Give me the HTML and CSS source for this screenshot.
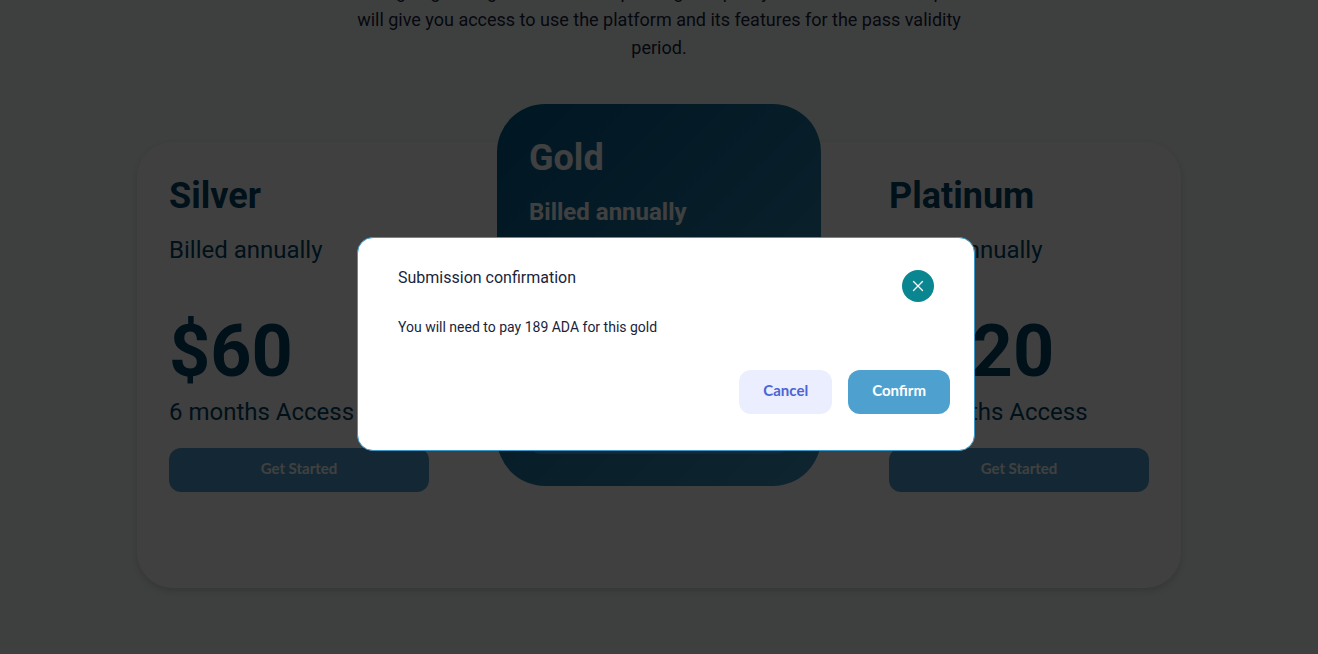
FILE: index.html
```html
<!DOCTYPE html>
<html lang="en">
<head>
<meta charset="utf-8">
<meta name="viewport" content="width=device-width, initial-scale=1">
<title>Plans</title>
<link rel="stylesheet" href="styles.css">
</head>
<body>
<main class="page">
  <p class="intro">When going through the list of the passing to a policy and all terms of the pass<br>will give you access to use the platform and its features for the pass validity period.</p>
  <section class="plans">
    <article class="plan">
      <h2 class="plan-name">Silver</h2>
      <p class="plan-billing">Billed annually</p>
      <p class="plan-price">$60</p>
      <p class="plan-access">6 months Access</p>
      <button class="button button-wide" type="button">Get Started</button>
    </article>
    <article class="plan plan-featured">
      <h2 class="plan-name">Gold</h2>
      <p class="plan-billing">Billed annually</p>
      <p class="plan-price">$90</p>
      <p class="plan-access">9 months Access</p>
      <button class="button button-wide" type="button">Get Started</button>
    </article>
    <article class="plan">
      <h2 class="plan-name">Platinum</h2>
      <p class="plan-billing">Billed annually</p>
      <p class="plan-price">$120</p>
      <p class="plan-access">12 months Access</p>
      <button class="button button-wide" type="button">Get Started</button>
    </article>
  </section>
</main>
<div class="overlay">
  <div class="dialog" role="dialog" aria-modal="true" aria-labelledby="dialog-title">
    <header class="dialog-header">
      <h1 class="dialog-title" id="dialog-title">Submission confirmation</h1>
      <button class="close" type="button" aria-label="Close">
        <svg class="close-icon" viewBox="0 0 12 12" aria-hidden="true"><path d="M1.5 1.5l9 9M10.5 1.5l-9 9"/></svg>
      </button>
    </header>
    <p class="dialog-text">You will need to pay 189 ADA for this gold</p>
    <footer class="dialog-actions">
      <button class="button button-light" type="button">Cancel</button>
      <button class="button" type="button">Confirm</button>
    </footer>
  </div>
</div>
</body>
</html>
```
FILE: styles.css
```css
* {
  box-sizing: border-box;
}

body {
  margin: 0;
  font-family: Roboto, "Liberation Sans", sans-serif;
  color: #1a1f3c;
  background: #f5fdfa;
  overflow: hidden;
}

h1, h2, p {
  margin: 0;
}

.page {
  display: flex;
  flex-direction: column;
  align-items: center;
  gap: 80px;
  margin-top: -22px;
  padding: 0 24px 64px;
}

.intro {
  max-width: 656px;
  font-size: 18px;
  line-height: 28px;
  text-align: center;
}

.plans {
  display: grid;
  grid-template-columns: repeat(3, 1fr);
  align-items: start;
  gap: 36px;
  width: 100%;
  max-width: 1044px;
  padding-bottom: 64px;
  border-radius: 36px;
  background: #fff;
  box-shadow: 0 3px 6px rgba(30, 30, 60, 0.16);
}

.plan {
  display: flex;
  flex-direction: column;
  padding: 32px;
  color: #004468;
}

.plan-featured {
  margin-top: -38px;
  border-radius: 48px;
  color: #fff;
  background: linear-gradient(135deg, #005c8c, #3c94bc);
}

.plan-name {
  font-size: 36px;
  font-weight: 700;
  line-height: 44px;
}

.plan-billing {
  margin-top: 16px;
  font-size: 24px;
  line-height: 32px;
}

.plan-featured .plan-billing {
  font-weight: 700;
}

.plan-price {
  margin-top: 42px;
  font-size: 72px;
  font-weight: 700;
  line-height: 88px;
}

.plan-access {
  margin-bottom: 20px;
  font-size: 24px;
  line-height: 32px;
}

.button {
  height: 44px;
  padding: 0 24px 4px;
  border: 0;
  border-radius: 12px;
  font-family: Lato, "Liberation Sans", sans-serif;
  font-size: 15px;
  font-weight: 700;
  color: #fff;
  background: #4ea1ce;
}

.button-wide {
  width: 100%;
}

.button-light {
  color: #4c64d4;
  background: #ebeeff;
}

.overlay {
  position: fixed;
  inset: 0;
  display: flex;
  align-items: center;
  justify-content: center;
  padding: 34px 0 0 14px;
  background: rgba(0, 0, 0, 0.75);
}

.dialog {
  width: 100%;
  max-width: 618px;
  padding: 32px 24px 36px;
  border: 1px solid #3c98c8;
  border-radius: 16px;
  background: #fff;
}

.dialog-header {
  display: flex;
  align-items: flex-start;
  justify-content: space-between;
  padding: 0 16px;
}

.dialog-title {
  font-size: 16px;
  font-weight: 400;
  line-height: 16px;
}

.close {
  display: grid;
  place-items: center;
  width: 32px;
  height: 32px;
  padding: 0;
  border: 0;
  border-radius: 50%;
  background: #0a8691;
}

.close-icon {
  width: 12px;
  height: 12px;
  fill: none;
  stroke: #fff;
  stroke-width: 1.3;
  stroke-linecap: round;
}

.dialog-text {
  margin: 16px 16px 34px;
  font-size: 14px;
  line-height: 18px;
}

.dialog-actions {
  display: flex;
  justify-content: flex-end;
  gap: 16px;
}
```
